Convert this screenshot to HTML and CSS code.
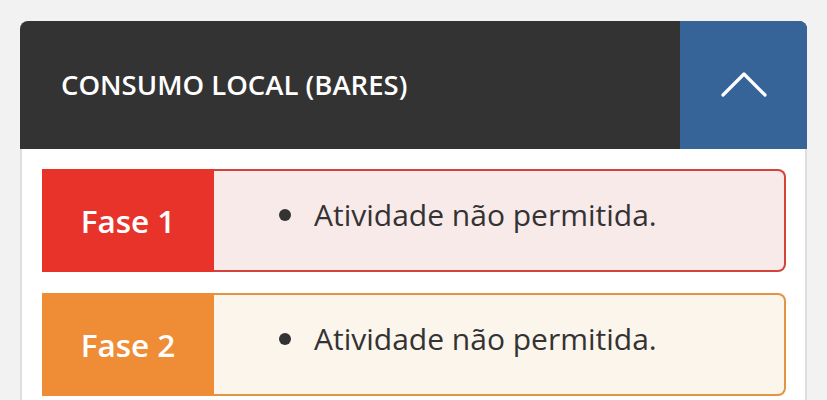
FILE: index.html
```html
<!DOCTYPE html>
<html lang="pt">
<head>
    <meta charset="UTF-8" />
    <meta name="viewport" content="width=device-width, initial-scale=1.0" />
    <title>Consumo local (bares)</title>
    <link rel="stylesheet" href="styles.css">
</head>
<body>
    <div class="card">
        <div class="card-header">
            <h2>CONSUMO LOCAL (BARES)</h2>
            <button class="toggle" aria-label="Recolher">
                <svg width="46" height="26" viewBox="0 0 46 26">
                    <polyline points="2,24 23,3 44,24" fill="none" stroke="#fff" stroke-width="3.2" stroke-linecap="round" stroke-linejoin="round" />
                </svg>
            </button>
        </div>
        <div class="card-body">
            <div class="phase phase-1">
                <div class="phase-label">Fase 1</div>
                <div class="phase-content">
                    <ul>
                        <li>Atividade não permitida.</li>
                    </ul>
                </div>
            </div>
            <div class="phase phase-2">
                <div class="phase-label">Fase 2</div>
                <div class="phase-content">
                    <ul>
                        <li>Atividade não permitida.</li>
                    </ul>
                </div>
            </div>
        </div>
    </div>
</body>
</html>
```

FILE: styles.css
```css
body { margin: 0; background-color: #f2f2f2; font-family: "Open Sans", Arial, sans-serif; color: #333; }
.card { margin: 21px 20px 0 20px; border-radius: 8px 8px 0 0; overflow: hidden; }
.card-header { display: flex; height: 128px; background-color: #333; }
.card-header h2 { flex: 1; margin: 0; padding: 0 0 2px 41px; display: flex; align-items: center; color: #fff; font-size: 27.5px; font-weight: 600; }
.toggle { width: 127px; border: none; background-color: #366498; display: flex; align-items: center; justify-content: center; padding: 0 0 2px 0; cursor: pointer; }
.card-body { background-color: #fff; border-left: 2px solid #dedede; border-right: 2px solid #dedede; padding: 20px 19px 20px 20px; }
.phase { display: flex; height: 103px; margin-bottom: 21px; }
.phase-label { width: 172px; display: flex; align-items: center; justify-content: center; color: #fff; font-size: 31.5px; font-weight: 600; }
.phase-content { flex: 1; display: flex; align-items: center; border: 2px solid; border-left: none; border-radius: 0 8px 8px 0; }
.phase-content ul { margin: 0; padding: 0 0 12px 100px; list-style: none; font-size: 30px; }
.phase-content li { position: relative; }
.phase-content li::before { content: ""; position: absolute; left: -35px; top: 50%; width: 12px; height: 12px; margin-top: -6px; border-radius: 50%; background-color: #333; }
.phase-1 .phase-label { background-color: #e8332a; }
.phase-1 .phase-content { background-color: #f9eaea; border-color: #d4433b; }
.phase-2 .phase-label { background-color: #ef8d37; }
.phase-2 .phase-content { background-color: #fcf5ec; border-color: #e29442; }
```
